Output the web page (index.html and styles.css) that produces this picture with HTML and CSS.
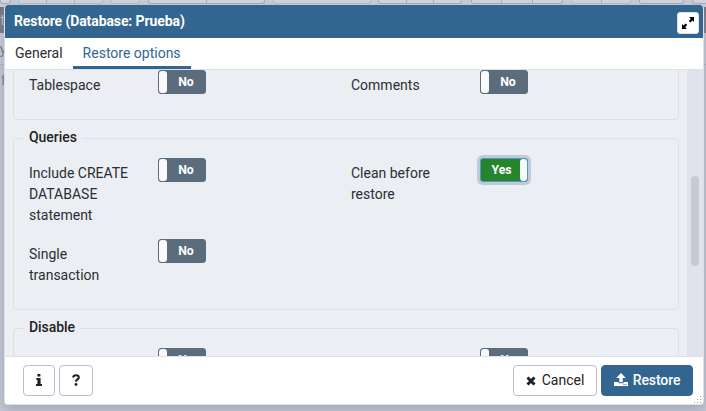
FILE: index.html
```html
<!DOCTYPE html>
<html lang="en">
<head>
<meta charset="utf-8">
<title>Restore</title>
<link rel="stylesheet" href="styles.css">
</head>
<body>
<div class="backdrop">
  <div class="toolbar">
    <span class="tool first"></span>
    <span class="tools faint"><i></i><i></i><i></i></span>
    <span class="tool small faint"></span>
    <span class="tools trio"><i></i><i></i></span>
    <span class="tool search faint"></span>
    <span class="tools quad"><i></i><i></i><i></i></span>
    <span class="tools wide"><i></i><i></i><i></i></span>
    <span class="tools pair faint"><i></i><i></i></span>
    <span class="tool mid"></span>
    <span class="tool last"></span>
  </div>
  <div class="strip">st</div>
  <div class="query">ry</div>
  <div class="results">f</div>
</div>
<main class="dialog">
  <header class="titlebar">
    <h1>Restore (Database: Prueba)</h1>
    <button class="expand" aria-label="Maximize"><svg width="12" height="12" viewBox="0 0 12 12"><path d="M7 0h5v5l-1.5-1.5L8.3 5.5 6.8 4l2-2.2zM0 7l1.5 1.5L3.7 6.5 5.2 8l-2 2.2L5 12H0z"/></svg></button>
  </header>
  <nav class="tabs"><a class="tab">General</a><a class="tab active">Restore options</a></nav>
  <div class="viewport">
    <div class="content">
      <section class="group sections">
        <div class="field"><label>Tablespace</label><span class="switch"><b>No</b></span></div>
        <div class="field"><label>Comments</label><span class="switch"><b>No</b></span></div>
      </section>
      <section class="group queries">
        <h2>Queries</h2>
        <div class="field"><label>Include CREATE DATABASE statement</label><span class="switch"><b>No</b></span></div>
        <div class="field"><label>Clean before restore</label><span class="switch on"><b>Yes</b></span></div>
        <div class="field"><label>Single transaction</label><span class="switch"><b>No</b></span></div>
      </section>
      <section class="group">
        <h2>Disable</h2>
        <div class="field"><label></label><span class="switch"><b>No</b></span></div>
        <div class="field"><label></label><span class="switch"><b>No</b></span></div>
      </section>
    </div>
    <div class="scrollbar"><div class="thumb"></div></div>
  </div>
  <footer class="footer">
    <button class="btn info" aria-label="Information"><svg width="6" height="12" viewBox="0 0 6 12"><path d="M1.4 0h3v2.6h-3zM.4 4h4.2v6H6v2H0v-2h1.4V6h-1z"/></svg></button>
    <button class="btn help" aria-label="Help"><svg width="8" height="12" viewBox="0 0 8 12"><path d="M1 3.5C1.4 1.8 2.4 1.2 4 1.2c1.8 0 2.8.9 2.8 2.3C6.8 5.6 4 5.3 4 7.8" fill="none" stroke="currentColor" stroke-width="2.1"/><circle cx="4" cy="10.5" r="1.4"/></svg></button>
    <span class="spacer"></span>
    <button class="btn cancel"><svg width="10" height="10" viewBox="0 0 10 10"><path d="M1.5 1.5l7 7m0-7l-7 7" fill="none" stroke="currentColor" stroke-width="3"/></svg>Cancel</button>
    <button class="btn primary"><svg width="14" height="13" viewBox="0 0 14 13"><path d="M7 0l4.8 5H8.7v4.2H5.3V5H2.2zM0 9h4.4v1.2h5.2V9H14v4H0z"/><path d="M9.5 11.5h1m1 0h1" stroke="#326690"/></svg>Restore</button>
    <svg class="grip" width="8" height="8" viewBox="0 0 8 8"><path d="M6 0h1v1H6zM3 3h1v1H3zM6 3h1v1H6zM0 6h1v1H0zM3 6h1v1H3zM6 6h1v1H6z"/></svg>
  </footer>
</main>
</body>
</html>
```
FILE: styles.css
```css
* { box-sizing: border-box; }
body {
  margin: 0;
  height: 411px;
  overflow: hidden;
  position: relative;
  background: #c4c8d3;
  color: #2c2e32;
  font: 14px/21px Roboto, "Liberation Sans", sans-serif;
}
.backdrop { height: 411px; color: #6b707c; }
.toolbar { display: flex; height: 7px; background: #caced8; }
.tool, .tools {
  flex: none;
  height: 4px;
  border: 1px solid #a6adbb;
  border-top: 0;
  border-radius: 0 0 3px 3px;
  background: #d3d6de;
}
.tools { display: flex; }
.tools i { flex: 1; border-left: 1px solid #a6adbb; }
.tools i:first-child { border-left: 0; }
.faint { border-color: #b9becb; }
.first { width: 11px; }
.first + .tools { width: 85px; margin-left: 7px; }
.small { width: 29px; margin-left: 8px; }
.trio { width: 117px; margin-left: 8px; }
.search { width: 98px; margin-left: 8px; }
.quad { width: 84px; margin-left: 7px; }
.wide { width: 92px; margin-left: 9px; }
.pair { width: 60px; margin-left: 8px; }
.mid { width: 45px; margin-left: 8px; }
.last { width: 30px; margin-left: 8px; }
.strip { height: 26px; background: #70757f; color: #b9bdc6; line-height: 26px; text-indent: -7px; }
.query { height: 32px; background: #c9cdd7; line-height: 32px; border-bottom: 1px solid #adb2bf; text-indent: -5px; }
.results { line-height: 30px; height: 346px; text-indent: 1px; }
.dialog {
  position: absolute;
  left: 4px;
  top: 5px;
  width: 700px;
  height: 400px;
  display: flex;
  flex-direction: column;
  overflow: hidden;
  border: 1px solid #dde0e6;
  border-top: 0;
  border-radius: 4px;
  background: #fff;
  box-shadow: 0 4px 12px #8b93a7aa;
}
.titlebar {
  flex: none;
  height: 33px;
  margin: 0 -1px;
  padding: 0 5px 0 10px;
  display: flex;
  align-items: center;
  justify-content: space-between;
  background: #326690;
  color: #fff;
}
h1 { margin: 0; font-size: 14px; font-weight: 700; letter-spacing: -.1px; }
.expand { width: 22px; height: 22px; margin-top: 3px; padding: 0; border: 1px solid #dde0e6; border-radius: 3px; background: #fff; display: grid; place-items: center; }
.tabs { flex: none; height: 32px; display: flex; border-bottom: 1px solid #dde0e6; }
.tab { height: 31px; padding: 5px 10px 0; }
.active { color: #326690; border-bottom: 3px solid #326690; }
.viewport { flex: none; height: 286px; display: flex; overflow: hidden; background: #ebeef3; }
.content { width: 682px; padding: 0 8px; margin-top: -20px; }
.group {
  position: relative;
  display: grid;
  grid-template-columns: 322px 322px;
  align-content: start;
  row-gap: 13px;
  width: 666px;
  height: 172px;
  margin-bottom: 18px;
  padding: 19px 0 0 15px;
  border: 1px solid #dde0e6;
  border-radius: 4px;
}
.sections { height: 70px; }
h2 { position: absolute; left: 10px; top: -12px; margin: 0; padding: 0 5px; background: #ebeef3; font-size: 14px; line-height: 21px; font-weight: 500; letter-spacing: -.05px; color: #222; }
.field { display: flex; align-items: flex-start; }
.field label { width: 129px; padding: 5px 22px 0 0; }
.switch {
  width: 48px;
  height: 24px;
  display: flex;
  border: 1px solid #5b6d7c;
  border-radius: 3px;
  background: #5b6d7c;
  color: #fff;
  font-size: 12.25px;
  line-height: 22px;
}
.switch::before { content: ""; width: 8px; border-radius: 3px; background: #f9fafb; }
.switch b { flex: 1; text-align: center; font-weight: 700; }
.on { flex-direction: row-reverse; background: #26852b; border-color: #5a92ca; box-shadow: 0 0 0 3px #bccbdc; }
.on b { padding-left: 2px; }
.on::before { width: 7px; }
.scrollbar { width: 16px; height: 286px; padding: 106px 4px 0; background: #e0e3eb; }
.thumb { height: 90px; border-radius: 4px; background: #c7cad5; }
.footer { position: relative; flex: none; height: 49px; border-top: 1px solid #dde0e6; display: flex; align-items: flex-start; padding: 8px 10px 0 18px; }
.spacer { flex: 1; }
.btn { height: 31px; padding: 0; display: flex; align-items: center; justify-content: center; gap: 6px; border: 1px solid #b9bdcd; border-radius: 4px; background: #fff; color: #222; font: inherit; }
.btn svg { fill: currentColor; }
.info { width: 32px; margin-right: 4px; }
.info svg, .help svg { margin-top: -2px; }
.help { width: 34px; }
.cancel { width: 84px; margin-right: 4px; }
.primary { width: 92px; border-color: #326690; background: #326690; color: #fff; font-weight: 500; gap: 5px; letter-spacing: -.1px; }
.primary svg { margin-top: -2px; }
.grip { position: absolute; right: 1px; bottom: 1px; fill: #999; }
```
